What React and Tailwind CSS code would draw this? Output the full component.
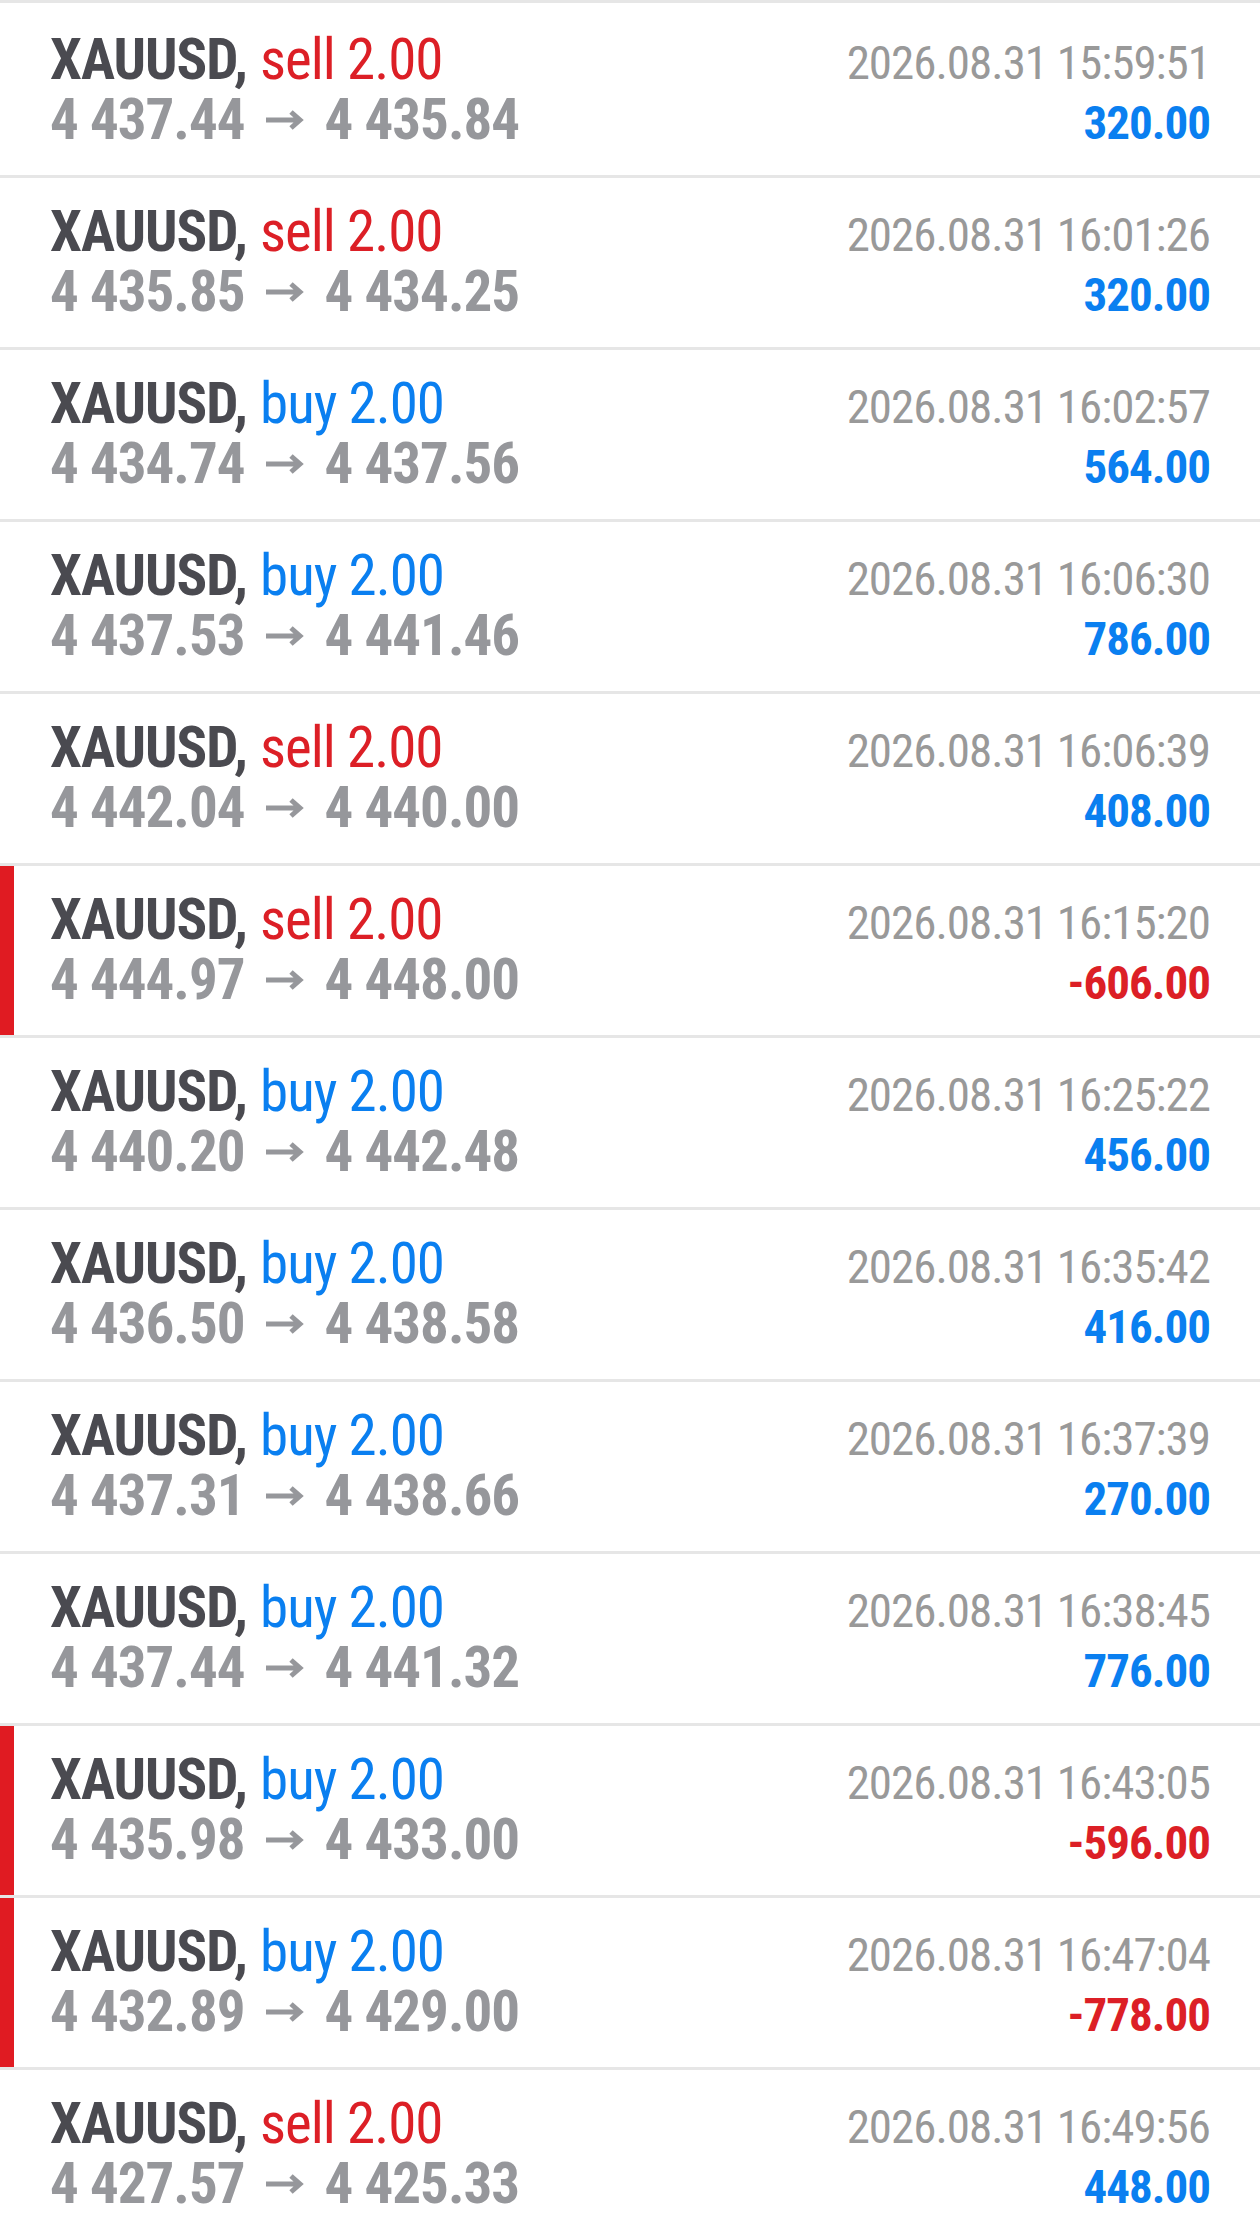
import React from 'react';

const trades = [
  { side: 'sell', open: '4 437.44', close: '4 435.84', time: '2026.08.31 15:59:51', profit: '320.00' },
  { side: 'sell', open: '4 435.85', close: '4 434.25', time: '2026.08.31 16:01:26', profit: '320.00' },
  { side: 'buy', open: '4 434.74', close: '4 437.56', time: '2026.08.31 16:02:57', profit: '564.00' },
  { side: 'buy', open: '4 437.53', close: '4 441.46', time: '2026.08.31 16:06:30', profit: '786.00' },
  { side: 'sell', open: '4 442.04', close: '4 440.00', time: '2026.08.31 16:06:39', profit: '408.00' },
  { side: 'sell', open: '4 444.97', close: '4 448.00', time: '2026.08.31 16:15:20', profit: '-606.00' },
  { side: 'buy', open: '4 440.20', close: '4 442.48', time: '2026.08.31 16:25:22', profit: '456.00' },
  { side: 'buy', open: '4 436.50', close: '4 438.58', time: '2026.08.31 16:35:42', profit: '416.00' },
  { side: 'buy', open: '4 437.31', close: '4 438.66', time: '2026.08.31 16:37:39', profit: '270.00' },
  { side: 'buy', open: '4 437.44', close: '4 441.32', time: '2026.08.31 16:38:45', profit: '776.00' },
  { side: 'buy', open: '4 435.98', close: '4 433.00', time: '2026.08.31 16:43:05', profit: '-596.00' },
  { side: 'buy', open: '4 432.89', close: '4 429.00', time: '2026.08.31 16:47:04', profit: '-778.00' },
  { side: 'sell', open: '4 427.57', close: '4 425.33', time: '2026.08.31 16:49:56', profit: '448.00' },
];

const Arrow = () => (
  <svg width="40" height="22" viewBox="0 0 40 22" className="mx-[20px] shrink-0" fill="none">
    <path d="M1 11h34M26 3l9 8-9 8" stroke="#96979b" strokeWidth="5" />
  </svg>
);

const TradeRow = ({ trade, first }) => {
  const loss = trade.profit.startsWith('-');

  return (
    <div className="flex border-t-[3px] border-[#e6e6e6]">
      {/* loss marker */}
      <div className={`w-[14px] shrink-0 ${loss ? 'bg-[#e01b22]' : 'bg-white'}`} />

      <div className={`flex-1 pl-[36px] pr-[50px] pb-[25px] ${first ? 'pt-[27px]' : 'pt-[24px]'}`}>
        <div className="flex h-[60px] items-baseline justify-between leading-[60px]">
          <div className="flex items-baseline gap-[13px] text-[57px] tracking-[-1px] whitespace-nowrap">
            <span className="font-bold text-[#4a4a50]">XAUUSD,</span>
            <span className={trade.side === 'sell' ? 'text-[#dc1f26]' : 'text-[#0a7ff0]'}>
              {trade.side} 2.00
            </span>
          </div>
          <span className="text-[47px] tracking-[-1px] text-[#999999] whitespace-nowrap">{trade.time}</span>
        </div>
        <div className="flex h-[60px] items-baseline justify-between leading-[60px]">
          <div className="flex items-center text-[57px] font-bold tracking-[-1px] text-[#96979b] whitespace-nowrap">
            <span>{trade.open}</span>
            <Arrow />
            <span>{trade.close}</span>
          </div>
          <span
            className={`text-[47px] font-bold tracking-[-1px] whitespace-nowrap ${
              loss ? 'text-[#dc1f26]' : 'text-[#0a7ff0]'
            }`}
          >
            {trade.profit}
          </span>
        </div>
      </div>
    </div>
  );
};

export default function App() {
  return (
    <div className="w-[1260px] h-[2231px] overflow-hidden bg-white font-['Roboto_Condensed','Roboto',sans-serif] [font-stretch:condensed]">
      {trades.map((t, i) => (
        <TradeRow key={i} trade={t} first={i === 0} />
      ))}
    </div>
  );
}
